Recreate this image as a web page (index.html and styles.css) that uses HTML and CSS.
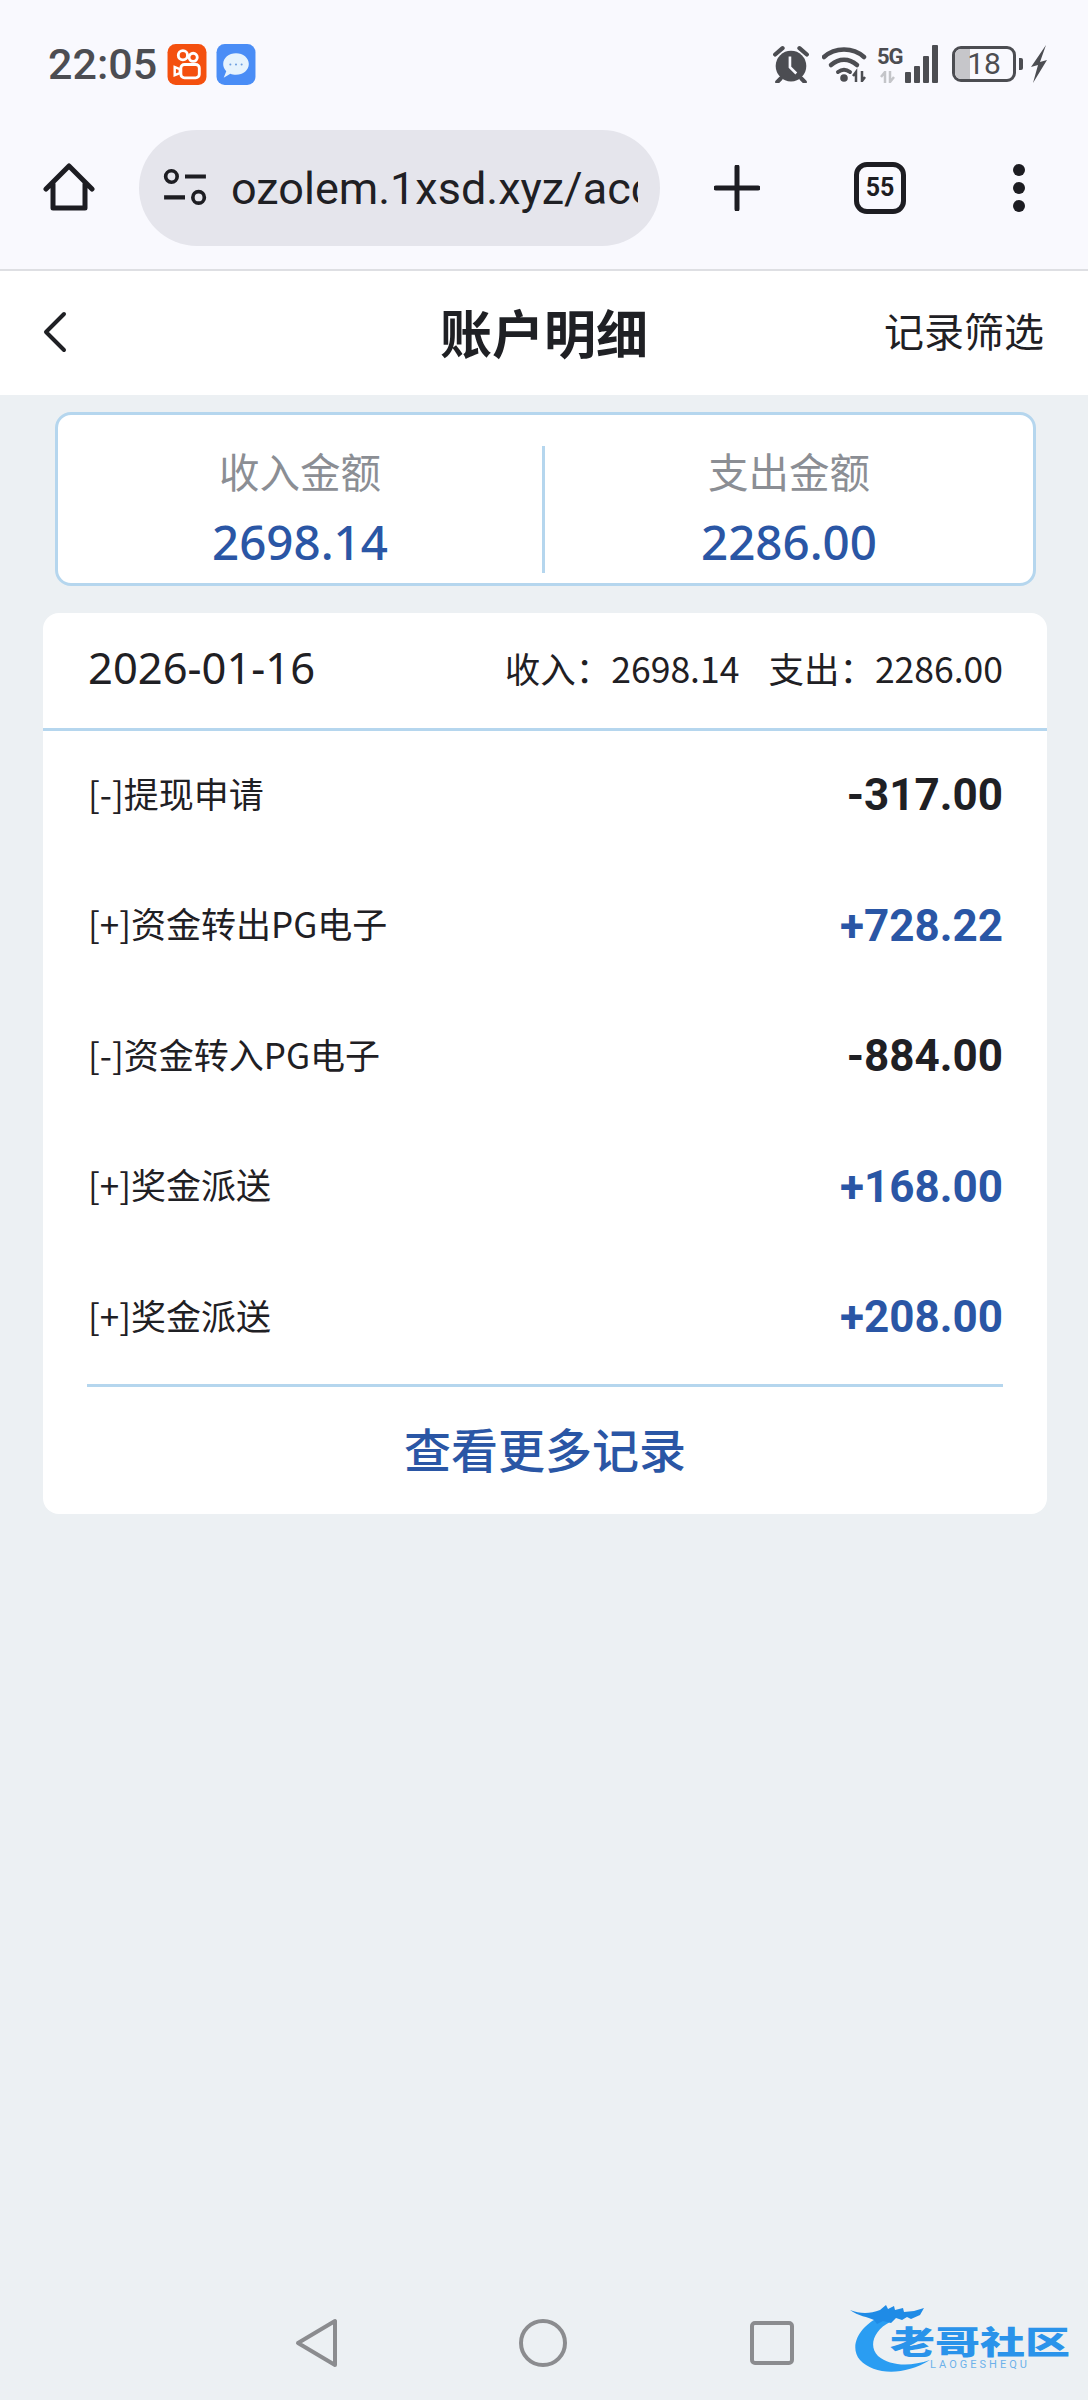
FILE: index.html
```html
<!DOCTYPE html>
<html lang="zh-CN">
<head>
    <meta charset="UTF-8">
    <meta name="viewport" content="width=device-width, initial-scale=1.0">
    <title>账户明细</title>
    <link rel="stylesheet" href="styles.css">
</head>
<body>

    <!-- Phone status bar -->
    <div class="status-bar">
        <div class="status-left">
            <span class="clock">22:05</span>
            <svg class="app-icon" viewBox="0 0 38 40">
                <rect width="38" height="40" rx="8" fill="#f4500f"/>
                <circle cx="15" cy="11" r="4.500" fill="none" stroke="#fff" stroke-width="2.800"/>
                <circle cx="25" cy="13" r="4" fill="none" stroke="#fff" stroke-width="2.800"/>
                <rect x="13" y="20" width="18" height="13" rx="3.500" fill="none" stroke="#fff" stroke-width="2.800"/>
                <path d="M12 24.500l-5-2v8l5-2z" fill="none" stroke="#fff" stroke-width="2.400"/>
            </svg>
            <svg class="app-icon" viewBox="0 0 38 40">
                <rect width="38" height="40" rx="8" fill="#4a8df6"/>
                <path d="M19 9c7 0 12.500 4.500 12.500 10.500S26 30 19 30c-2 0-4-.4-5.500-1L7 33l2.500-6.500C7.500 24.500 6.500 22 6.500 19.500 6.500 13.500 12 9 19 9z" fill="#e6f3fd"/>
                <circle cx="13.500" cy="20" r="1" fill="#6d9fe0"/>
                <circle cx="19" cy="20" r="1" fill="#6d9fe0"/>
                <circle cx="24.500" cy="20" r="1" fill="#6d9fe0"/>
            </svg>
        </div>
        <div class="status-right">
            <svg class="alarm" viewBox="0 0 36 36">
                <circle cx="18" cy="20" r="14.500" fill="#4c4d52"/>
                <path d="M3 9l7-6M33 9l-7-6M8 32l-3 3M28 32l3 3" stroke="#4c4d52" stroke-width="4" stroke-linecap="round"/>
                <path d="M17 11v10l6 6" fill="none" stroke="#f9f9fe" stroke-width="2.500"/>
            </svg>
            <svg class="wifi" viewBox="0 0 46 36">
                <path d="M2 11C13 1 31 1 42 11" fill="none" stroke="#4c4d52" stroke-width="4.500" stroke-linecap="round"/>
                <path d="M9 19c8-7 18-7 26 0" fill="none" stroke="#4c4d52" stroke-width="4.500" stroke-linecap="round"/>
                <path d="M16 26c4-3 8-3 12 0" fill="none" stroke="#4c4d52" stroke-width="4" stroke-linecap="round"/>
                <circle cx="22" cy="32" r="3.800" fill="#4c4d52"/>
                <path d="M34 36V26l-3 4M40 25v10l3-4" fill="none" stroke="#4c4d52" stroke-width="2.500"/>
            </svg>
            <div class="signal">
                <div class="net-col">
                    <span class="net-label">5G</span>
                    <svg class="net-arrows" viewBox="0 0 22 12">
                        <path d="M8 12V1L4 6M13 0v11l4-5" fill="none" stroke="#c4c5c9" stroke-width="2.500"/>
                    </svg>
                </div>
                <div class="bars">
                    <i class="bar-1"></i><i class="bar-2"></i><i class="bar-3"></i><i class="bar-4"></i>
                </div>
            </div>
            <div class="battery">
                <div class="battery-body"><span class="battery-fill"></span><span class="battery-num">18</span></div>
                <span class="battery-cap"></span>
            </div>
            <svg class="bolt" viewBox="0 0 16 38">
                <path d="M15 0L0 22l7-2-5 18 14-23-7 2z" fill="#4c4d52"/>
            </svg>
        </div>
    </div>

    <!-- Browser toolbar -->
    <div class="toolbar">
        <svg class="tool-home" viewBox="0 0 52 52">
            <path d="M3 27L26 4l23 23M10 22v24h32V22" fill="none" stroke="#1d1d22" stroke-width="5" stroke-linecap="round" stroke-linejoin="round"/>
        </svg>
        <div class="url-bar">
            <svg class="url-icon" viewBox="0 0 44 38">
                <circle cx="9" cy="8" r="5.500" fill="none" stroke="#1d1d22" stroke-width="3.500"/>
                <path d="M22 8h20M2 28h20" stroke="#1d1d22" stroke-width="4"/>
                <circle cx="35" cy="28" r="5.500" fill="none" stroke="#1d1d22" stroke-width="3.500"/>
            </svg>
            <div class="url-clip"><span class="url-text">ozolem.1xsd.xyz/account</span></div>
        </div>
        <svg class="tool-plus" viewBox="0 0 46 46">
            <path d="M23 2v42M2 23h42" stroke="#1d1d22" stroke-width="5" stroke-linecap="round"/>
        </svg>
        <div class="tabs-count">55</div>
        <div class="tool-more"><i></i><i></i><i></i></div>
    </div>

    <!-- Page header -->
    <header class="page-head">
        <svg class="back" viewBox="0 0 24 42">
            <path d="M21 3L3 21l18 18" fill="none" stroke="#1f2024" stroke-width="4" stroke-linecap="round" stroke-linejoin="round"/>
        </svg>
        <h1>账户明细</h1>
        <span class="filter">记录筛选</span>
    </header>

    <main class="content">
        <section class="summary">
            <div class="summary-col">
                <div class="summary-label">收入金额</div>
                <div class="summary-value">2698.14</div>
            </div>
            <div class="summary-col">
                <div class="summary-label">支出金额</div>
                <div class="summary-value">2286.00</div>
            </div>
        </section>

        <section class="records">
            <div class="records-head">
                <span class="records-date">2026-01-16</span>
                <span class="records-total"><span>收入：2698.14</span><span>支出：2286.00</span></span>
            </div>
            <div class="record-list">
                <div class="record"><span class="record-name">[-]提现申请</span><span class="record-amount">-317.00</span></div>
                <div class="record"><span class="record-name">[+]资金转出PG电子</span><span class="record-amount plus">+728.22</span></div>
                <div class="record"><span class="record-name">[-]资金转入PG电子</span><span class="record-amount">-884.00</span></div>
                <div class="record"><span class="record-name">[+]奖金派送</span><span class="record-amount plus">+168.00</span></div>
                <div class="record"><span class="record-name">[+]奖金派送</span><span class="record-amount plus">+208.00</span></div>
            </div>
            <div class="more">查看更多记录</div>
        </section>
    </main>

    <!-- System nav bar -->
    <nav class="nav-bar">
        <svg class="nav-back" viewBox="0 0 44 50">
            <path d="M3 25L40 3v44z" fill="none" stroke="#8b8c8f" stroke-width="4" stroke-linejoin="round"/>
        </svg>
        <svg class="nav-home" viewBox="0 0 48 48">
            <circle cx="24" cy="24" r="22" fill="none" stroke="#8b8c8f" stroke-width="4"/>
        </svg>
        <svg class="nav-recent" viewBox="0 0 44 44">
            <rect x="2" y="2" width="40" height="40" rx="3" fill="none" stroke="#8b8c8f" stroke-width="4"/>
        </svg>
    </nav>

    <!-- Watermark lies over the nav bar -->
    <div class="watermark">
        <svg class="wm-dragon" viewBox="0 0 100 72">
            <path d="M34 11C10 20-2 42 10 56c14 15 44 16 70 0-20 7-40 6-52-4C18 42 24 26 40 18z" fill="#2a9df2"/>
            <path d="M0 6c10 4 20 4 30 0l6-5 2 4 6-3 1 4 8-2 1 4 10-1 10-3-4 7-9 4-4-2-5 3-6-2-5 5-8-2-6 3-3-4C18 13 8 12 0 6z" fill="#1f8be6"/>
        </svg>
        <div class="wm-text">
            <span class="wm-title">老哥社区</span>
            <span class="wm-sub">LAOGESHEQU</span>
        </div>
    </div>

</body>
</html>
```

FILE: styles.css
```css
* {
    margin: 0;
    padding: 0;
    box-sizing: border-box;
}
body {
    position: relative;
    width: 1088px;
    height: 2400px;
    overflow: hidden;
    display: flex;
    flex-direction: column;
    background-color: #ecf0f3;
    font-family: "Noto Sans CJK SC", "Noto Sans", sans-serif;
    color: #1f2024;
}

/* status bar */
.status-bar {
    height: 112px;
    padding: 16px 40px 0 48px;
    display: flex;
    justify-content: space-between;
    align-items: center;
    background-color: #f9f9fe;
}
.status-left {
    display: flex;
    align-items: center;
}
.clock {
    font-family: "Roboto", sans-serif;
    font-size: 43px;
    font-weight: 500;
    color: #4c4d52;
    margin-right: 10px;
}
.app-icon {
    width: 40px;
    height: 41px;
    margin-right: 9px;
}
.status-right {
    display: flex;
    align-items: center;
    height: 40px;
}
.alarm {
    width: 38px;
    height: 38px;
    margin-right: 12px;
}
.wifi {
    width: 46px;
    height: 36px;
    margin-right: 9px;
}
.signal {
    width: 61px;
    height: 38px;
    margin-right: 14px;
    display: flex;
    justify-content: space-between;
    align-items: flex-end;
}
.net-col {
    display: flex;
    flex-direction: column;
    align-items: flex-start;
    gap: 3px;
}
.net-label {
    font-family: "Roboto", sans-serif;
    font-size: 22px;
    font-weight: 700;
    line-height: 22px;
    letter-spacing: -1px;
    color: #4c4d52;
}
.net-arrows {
    width: 22px;
    height: 12px;
}
.bars {
    display: flex;
    align-items: flex-end;
    gap: 3px;
}
.bars i {
    display: block;
    width: 6px;
    border-radius: 1px;
    background-color: #4c4d52;
}
.bar-1 { height: 11px; }
.bar-2 { height: 17px; }
.bar-3 { height: 27px; }
.bar-4 { height: 38px; }
.battery {
    display: flex;
    align-items: center;
    margin-right: 7px;
}
.battery-body {
    position: relative;
    width: 64px;
    height: 36px;
    border: 3px solid #4c4d52;
    border-radius: 9px;
    overflow: hidden;
    text-align: center;
}
.battery-fill {
    position: absolute;
    left: 0;
    top: 0;
    bottom: 0;
    width: 15px;
    background-color: #c6c6ca;
}
.battery-num {
    position: relative;
    font-family: "Roboto", sans-serif;
    font-size: 30px;
    line-height: 30px;
    color: #4c4d52;
}
.battery-cap {
    width: 4px;
    height: 12px;
    margin-left: 3px;
    border-radius: 0 2px 2px 0;
    background-color: #4c4d52;
}
.bolt {
    width: 18px;
    height: 38px;
}

/* browser toolbar */
.toolbar {
    height: 159px;
    padding: 0 0 5px 43px;
    display: flex;
    align-items: center;
    background-color: #f9f9fe;
    border-bottom: 2px solid #dedfe3;
}
.tool-home {
    width: 52px;
    height: 52px;
    margin-right: 44px;
}
.url-bar {
    width: 521px;
    height: 116px;
    padding: 0 22px 0 23px;
    display: flex;
    align-items: center;
    border-radius: 58px;
    background-color: #e5e5ec;
}
.url-icon {
    width: 46px;
    height: 40px;
    margin-right: 23px;
    flex-shrink: 0;
}
.url-clip {
    overflow: hidden;
    flex: 1;
}
.url-text {
    font-family: "Roboto", sans-serif;
    font-size: 45px;
    white-space: nowrap;
    color: #1f2024;
}
.tool-plus {
    width: 46px;
    height: 46px;
    margin-left: 54px;
}
.tabs-count {
    width: 52px;
    height: 52px;
    margin-left: 94px;
    border: 5px solid #1d1d22;
    border-radius: 13px;
    font-family: "Roboto", sans-serif;
    font-size: 25px;
    font-weight: 700;
    line-height: 42px;
    text-align: center;
    color: #1d1d22;
}
.tool-more {
    margin-left: 107px;
    display: flex;
    flex-direction: column;
    gap: 6px;
}
.tool-more i {
    display: block;
    width: 12px;
    height: 12px;
    border-radius: 50%;
    background-color: #1d1d22;
}

/* page header */
.page-head {
    position: relative;
    height: 124px;
    padding: 0 44px 2px 43px;
    display: flex;
    align-items: center;
    justify-content: space-between;
    background-color: #fff;
}
.back {
    width: 24px;
    height: 42px;
}
.page-head h1 {
    position: absolute;
    left: 0;
    right: 0;
    padding-bottom: 2px;
    font-size: 52px;
    font-weight: 700;
    text-align: center;
    pointer-events: none;
}
.filter {
    margin-bottom: 4px;
    font-size: 40px;
}

/* summary card + records */
.content {
    padding: 17px 41px 0 43px;
    display: flex;
    flex-direction: column;
}
.summary {
    margin: 0 11px 0 12px;
    height: 174px;
    padding: 31px 0 10px;
    display: flex;
    background-color: #fff;
    border: 3px solid #b5d6ee;
    border-radius: 16px;
}
.summary-col {
    flex: 1;
    text-align: center;
}
.summary-col:first-child {
    flex: 0 0 484px;
}
.summary-col + .summary-col {
    border-left: 3px solid #b5d6ee;
}
.summary-label {
    font-size: 40.500px;
    line-height: 50px;
    color: #8b8e94;
}
.summary-value {
    margin-top: 20px;
    font-family: "Noto Sans", sans-serif;
    font-size: 47.500px;
    font-weight: 500;
    line-height: 52px;
    color: #2a56a5;
}
.records {
    margin-top: 27px;
    background-color: #fff;
    border-radius: 16px;
}
.records-head {
    height: 118px;
    padding: 0 44px 7px 45px;
    display: flex;
    align-items: center;
    justify-content: space-between;
    border-bottom: 3px solid #b5d6ee;
}
.records-date {
    font-family: "Noto Sans", sans-serif;
    font-size: 43.500px;
}
.records-total {
    display: flex;
    gap: 29px;
    font-size: 35.500px;
}
.record-list {
    padding: 0 44px 0 45px;
}
.record {
    height: 130.500px;
    padding-bottom: 8px;
    display: flex;
    align-items: center;
    justify-content: space-between;
}
.record-name {
    font-size: 35px;
}
.record-amount {
    margin-top: 6px;
    font-family: "Roboto", sans-serif;
    font-size: 44px;
    font-weight: 700;
}
.plus {
    color: #2a56a5;
}
.more {
    margin: 0 44px;
    height: 130px;
    padding-bottom: 6px;
    display: flex;
    align-items: center;
    justify-content: center;
    border-top: 3px solid #b5d6ee;
    font-size: 47px;
    font-weight: 500;
    color: #2a56a5;
}

/* system nav */
.nav-bar {
    position: absolute;
    left: 0;
    right: 0;
    top: 2318px;
    height: 50px;
    display: flex;
    align-items: center;
}
.nav-back {
    width: 44px;
    height: 50px;
    margin-left: 295px;
}
.nav-home {
    width: 48px;
    height: 48px;
    margin-left: 180px;
}
.nav-recent {
    width: 44px;
    height: 44px;
    margin-left: 183px;
}

/* watermark */
.watermark {
    position: absolute;
    left: 850px;
    top: 2304px;
    width: 225px;
    height: 72px;
}
.wm-dragon {
    position: absolute;
    left: 0;
    top: 0;
    width: 100px;
    height: 72px;
}
.wm-text {
    position: absolute;
    left: 40px;
    top: 21px;
    width: 180px;
    display: flex;
    flex-direction: column;
    align-items: center;
}
.wm-title {
    font-size: 45px;
    font-weight: 900;
    line-height: 32px;
    color: #2a93ea;
    white-space: nowrap;
    transform: scaleY(0.7);
}
.wm-sub {
    margin-top: 2px;
    font-family: "Roboto", sans-serif;
    font-size: 11px;
    line-height: 12px;
    letter-spacing: 3px;
    color: #6db2ea;
}
```
